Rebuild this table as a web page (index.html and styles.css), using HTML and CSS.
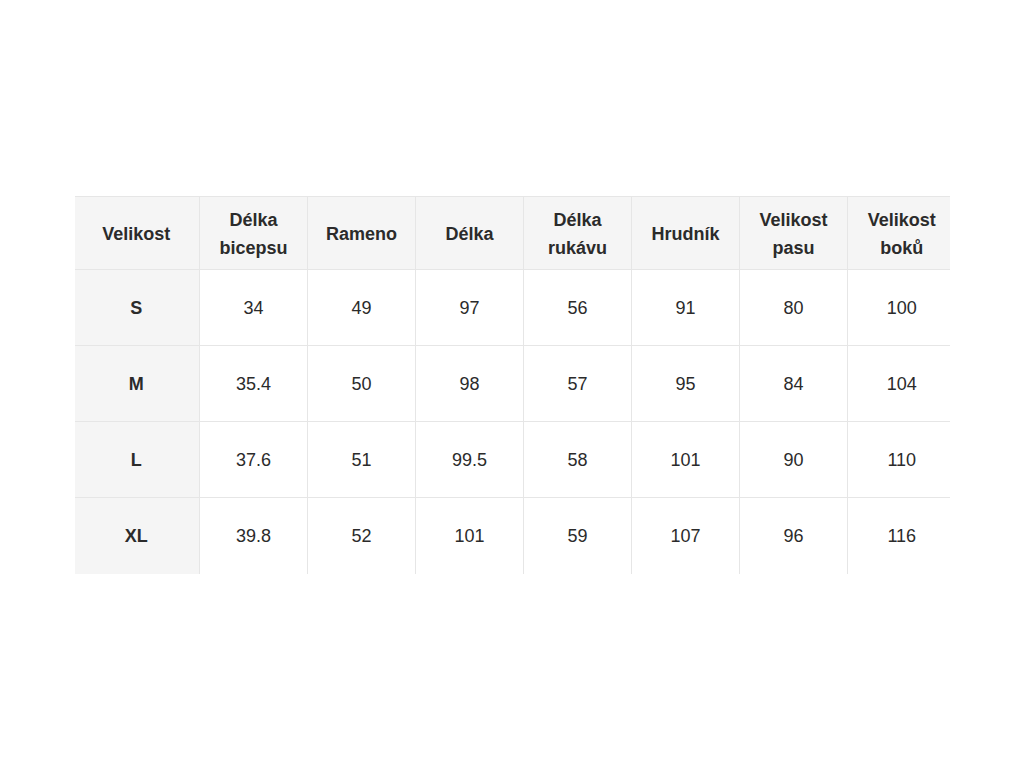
FILE: index.html
```html
<!DOCTYPE html>
<html lang="cs">
<head>
<meta charset="utf-8">
<title>Velikostní tabulka</title>
<link rel="stylesheet" href="styles.css">
</head>
<body>
<div class="page">
  <div class="wrap">
    <table class="sizes">
      <colgroup>
        <col class="c-first">
        <col class="c"><col class="c"><col class="c"><col class="c"><col class="c"><col class="c"><col class="c">
      </colgroup>
      <thead>
        <tr>
          <th>Velikost</th>
          <th>Délka<br>bicepsu</th>
          <th>Rameno</th>
          <th>Délka</th>
          <th>Délka<br>rukávu</th>
          <th>Hrudník</th>
          <th>Velikost<br>pasu</th>
          <th>Velikost<br>boků</th>
        </tr>
      </thead>
      <tbody>
        <tr><th>S</th><td>34</td><td>49</td><td>97</td><td>56</td><td>91</td><td>80</td><td>100</td></tr>
        <tr><th>M</th><td>35.4</td><td>50</td><td>98</td><td>57</td><td>95</td><td>84</td><td>104</td></tr>
        <tr><th>L</th><td>37.6</td><td>51</td><td>99.5</td><td>58</td><td>101</td><td>90</td><td>110</td></tr>
        <tr><th>XL</th><td>39.8</td><td>52</td><td>101</td><td>59</td><td>107</td><td>96</td><td>116</td></tr>
      </tbody>
    </table>
  </div>
</div>
</body>
</html>
```

FILE: styles.css
```css
html, body {
  margin: 0;
  padding: 0;
  background: #ffffff;
}

body {
  font-family: "Liberation Sans", Arial, sans-serif;
  color: #2b2b2b;
}

.page {
  padding: 196px 74px 0 75px;
}

.wrap {
  width: 875px;
  overflow: hidden;
}

.sizes {
  border-collapse: collapse;
  table-layout: fixed;
  width: 880px;
  font-size: 18px;
  line-height: 28px;
}

.c-first { width: 124px; }
.c { width: 108px; }

.sizes th,
.sizes td {
  text-align: center;
  vertical-align: middle;
  padding: 0 0 0 1px;
  border-left: 1px solid #e6e6e6;
  border-top: 1px solid #e6e6e6;
}

.sizes tr > :first-child {
  border-left: none;
  padding-left: 0;
  padding-right: 1px;
}

.sizes thead th {
  height: 70px;
  padding-top: 2px;
  background: #f5f5f5;
  font-weight: bold;
}

.sizes tbody th {
  background: #f5f5f5;
  font-weight: bold;
}

.sizes tbody td {
  font-weight: normal;
}

.sizes tbody tr {
  height: 76px;
}

.sizes tbody tr:last-child th,
.sizes tbody tr:last-child td {
  height: 75px;
}
```
